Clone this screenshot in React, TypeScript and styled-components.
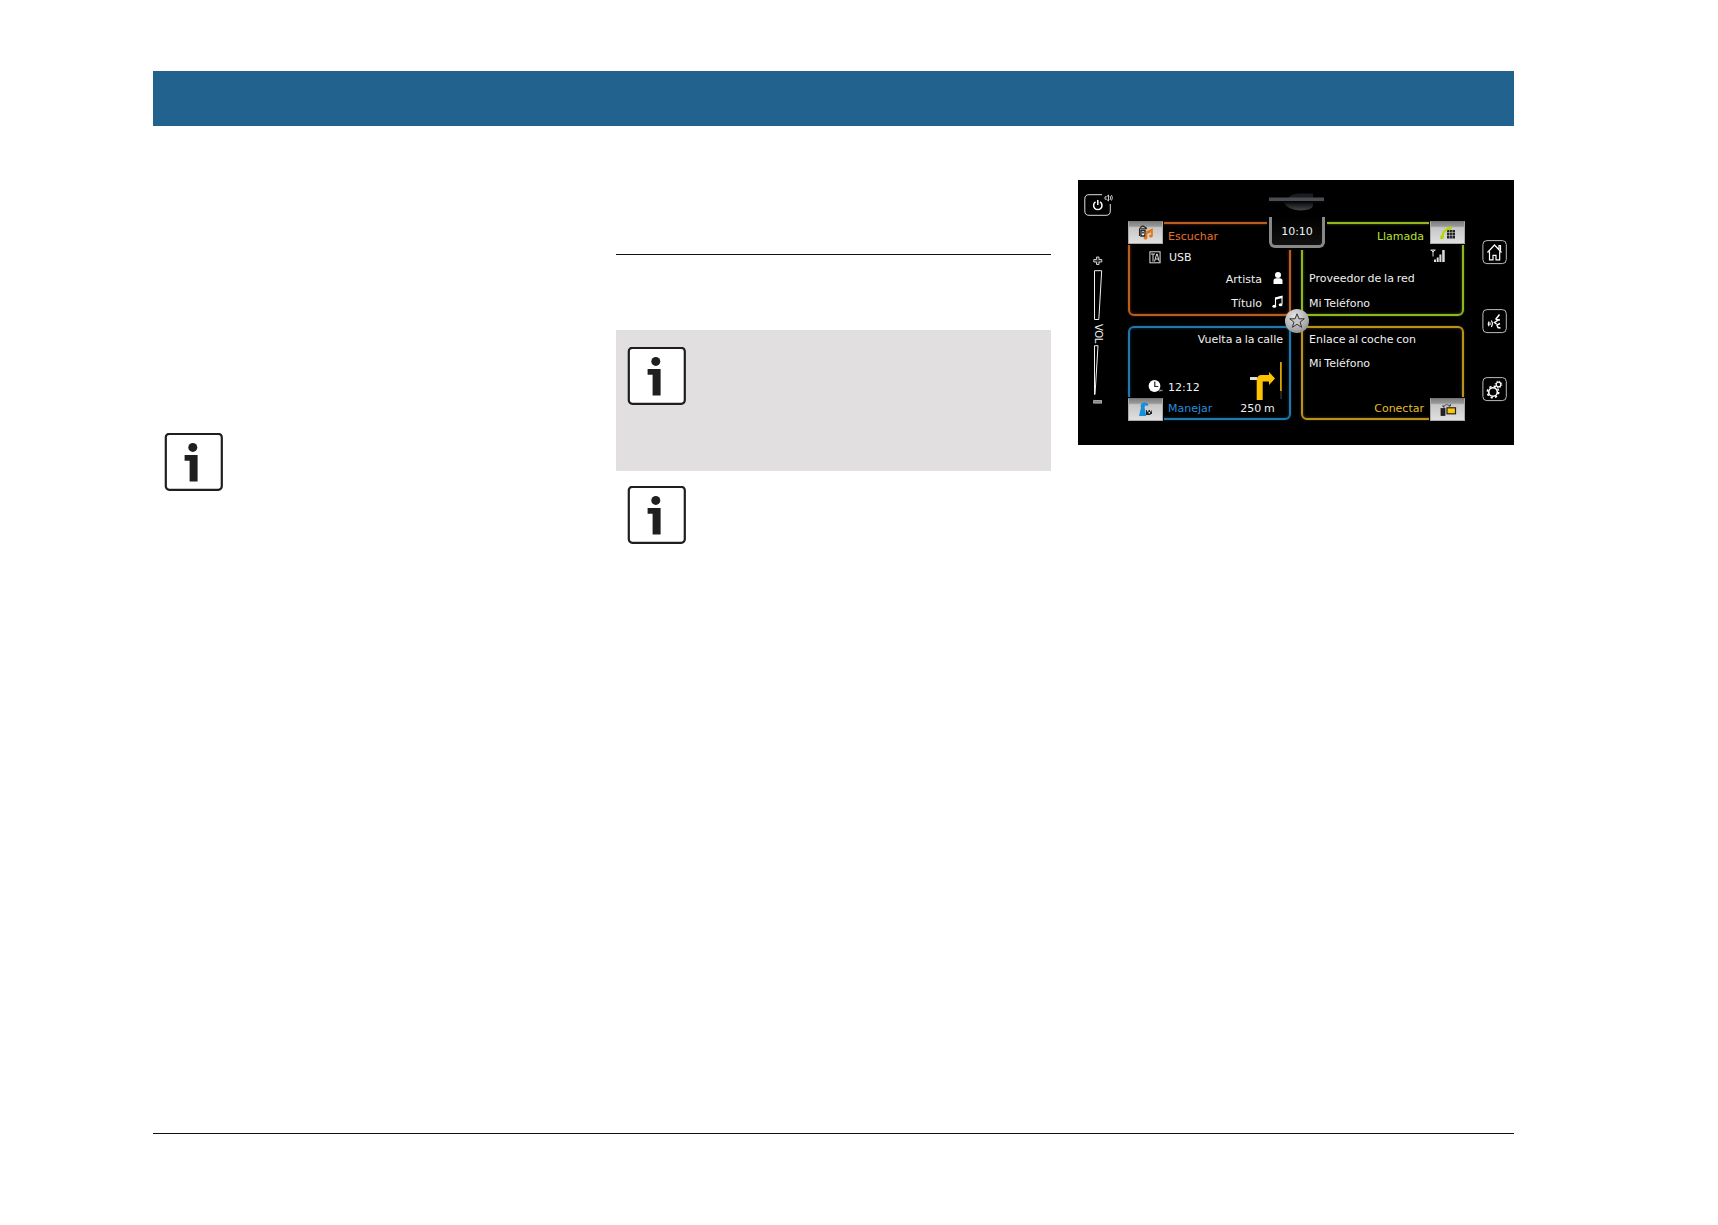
import React from 'react';
import styled, { createGlobalStyle } from 'styled-components';

const GlobalStyle = createGlobalStyle`
  * {
    box-sizing: border-box;
  }

  body {
    margin: 0;
    background: #fff;
  }

  svg {
    display: block;
    flex: none;
  }
`;

const Page = styled.div`
  width: 1718px;
  height: 1225px;
  padding: 71px 204px 0 153px;
  display: flex;
  flex-direction: column;
  overflow: hidden;
`;

const HeaderBar = styled.header`
  height: 55px;
  background: #22628f;
`;

const Columns = styled.main`
  flex: none;
  height: 1007px;
  display: grid;
  grid-template-columns: 463px 462px 436px;
`;

const Column = styled.section<{ $top: number; $gutter?: number }>`
  padding-top: ${({ $top }) => $top}px;
  padding-right: ${({ $gutter = 0 }) => $gutter}px;
`;

const Rule = styled.hr`
  width: 100%;
  height: 1px;
  margin: 0;
  border: 0;
  background: #111;
`;

const Note = styled.div<{ $shaded?: boolean }>`
  height: ${({ $shaded }) => ($shaded ? 141 : 90)}px;
  margin-top: ${({ $shaded }) => ($shaded ? 75 : 0)}px;
  padding: ${({ $shaded }) => ($shaded ? 17 : 15)}px 0 0 11px;
  background: ${({ $shaded }) => ($shaded ? '#e1dfe0' : 'transparent')};
`;

const Device = styled.div`
  height: 265px;
  display: grid;
  grid-template-columns: 50px 336px 50px;
  background: #000;
  color: #f0f0f0;
  font-family: 'DejaVu Sans', sans-serif;
  font-size: 11px;
  word-spacing: -0.7px;
`;

const LeftRail = styled.div`
  padding: 14px 0 0 6px;
  display: flex;
  flex-direction: column;
`;

const Volume = styled.div`
  width: 12px;
  margin: 38px 0 0 8px;
  display: flex;
  flex-direction: column;
  align-items: center;
`;

const VolumeGap = styled.div`
  height: 4px;
`;

const VolumeLabel = styled.span`
  height: 24px;
  line-height: 12px;
  font-size: 10px;
  letter-spacing: -0.4px;
  writing-mode: vertical-rl;
  text-align: center;
`;

const RightRail = styled.div`
  padding: 60px 0 0 18px;
  display: flex;
  flex-direction: column;
  gap: 43.5px;
`;

const Screen = styled.div`
  position: relative;
  padding-top: 42px;
  display: grid;
  grid-template-columns: 163px 163px;
  grid-auto-rows: 94px;
  gap: 10px;
`;

const Panel = styled.div<{ $color: string; $glow: string }>`
  position: relative;
  display: flex;
  flex-direction: column;
  border: 2px solid ${({ $color }) => $color};
  border-radius: 6px;
  box-shadow: 0 0 2px ${({ $glow }) => $glow}, inset 0 0 3px ${({ $glow }) => $glow};
`;

const Row = styled.div<{ $h?: number; $right?: boolean; $inset?: number }>`
  flex: none;
  height: ${({ $h = 22 }) => $h}px;
  padding: 0 ${({ $right, $inset = 6 }) => ($right ? $inset : 0)}px 0 ${({ $right, $inset = 6 }) => ($right ? 0 : $inset)}px;
  display: flex;
  align-items: center;
  justify-content: ${({ $right }) => ($right ? 'flex-end' : 'flex-start')};
  white-space: nowrap;
`;

const Spacer = styled.div`
  flex: 1;
`;

const Heading = styled.span<{ $color: string }>`
  color: ${({ $color }) => $color};
`;

const LeadIcon = styled.span`
  width: 20px;
`;

const TrailIcon = styled.span`
  width: 21px;
  padding-bottom: 3px;
  display: flex;
  justify-content: flex-end;
`;

const Distance = styled.span`
  margin-left: 28px;
`;

const Turn = styled.div`
  margin: -12px 7px 0 auto;
`;

const Tab = styled.div<{ $bottom?: boolean; $right?: boolean }>`
  position: absolute;
  ${({ $bottom }) => ($bottom ? 'bottom: -3px' : 'top: -3px')};
  ${({ $right }) => ($right ? 'right: -3px' : 'left: -2px')};
  width: 35px;
  height: 23px;
  display: flex;
  align-items: center;
  justify-content: center;
  border: 1px solid #aaa;
  border-top-color: #777;
  background: linear-gradient(#808080 0, #989898 20%, #c6c6c6 27%, #e0e0e0 100%);
  box-shadow: 0 0 0 1px #000;
`;

const Slot = styled.div`
  position: absolute;
  top: 12px;
  left: 141px;
`;

const ClockTab = styled.div`
  position: absolute;
  top: 37px;
  left: 139px;
  width: 60px;
  height: 33px;
  padding: 0 2px 2px;
  background: #000;
`;

const ClockFace = styled.div`
  height: 31px;
  border: 3px solid #888;
  border-top: 0;
  border-radius: 0 0 6px 6px;
  background: linear-gradient(#000, #111);
  text-align: center;
  line-height: 30px;
`;

const StarButton = styled.div`
  position: absolute;
  top: 129px;
  left: 157px;
  width: 24px;
  height: 24px;
  display: grid;
  place-items: center;
  border-radius: 50%;
  background: radial-gradient(circle at 40% 30%, #e5e5e5, #aaa 60%, #777);
`;

const InfoIcon = () => (
  <svg width="59" height="59" viewBox="-0.6 0 59 59">
    <rect x="1.2" y="0.8" width="56" height="56" rx="3.5" fill="#fff" stroke="#211e1f" strokeWidth="2.2" />
    <circle cx="28.2" cy="14.4" r="4.5" fill="#211e1f" />
    <path d="M20 22H33v26.4h-8V27.8h-5z" fill="#211e1f" />
  </svg>
);

const PowerIcon = () => (
  <svg width="30" height="24" viewBox="0 0 30 24" fill="none" stroke="#ddd">
    <path d="M18 .7H5Q.8.7.8 5v12q0 4.300 4.200 4.300h17q4.300 0 4.300-4.300V10" />
    <path d="M11.500 7.900a4.200 4.200 0 1 0 4.600 0M13.800 6v5" strokeWidth="1.500" stroke="#fff" />
    <path d="M21 2.800h1.500l2-1.800v6l-2-1.800H21zM26 2q1.200 2 0 4M27.500 1q1.800 3 0 5.500" strokeWidth=".9" />
  </svg>
);

const PlusIcon = () => (
  <svg width="10" height="10" viewBox="0 0 10 10">
    <path d="M3.500 1h2.500v2.500h2.800V6H6v2.500H3.500V6H.8V3.500h2.700z" fill="#333" stroke="#ccc" />
  </svg>
);

const VolumeWedge = ({ small }: { small?: boolean }) => (
  <svg width="10" height="51" viewBox="0 0 10 51" fill="none" stroke="#eee">
    <path d={small ? 'M1.500.7h3.500L2 49.500h-.5z' : 'M1.500.7h7.200L5.800 49.500H1.500z'} />
  </svg>
);

const MinusIcon = () => (
  <svg width="10" height="4" viewBox="0 0 10 4">
    <rect x=".6" y=".6" width="8" height="2.500" fill="#888" stroke="#bbb" strokeWidth=".8" />
  </svg>
);

const RailButton: React.FC<{ children: React.ReactNode }> = ({ children }) => (
  <svg width="26" height="25" viewBox="0 0 26 25" fill="none" stroke="#fff">
    <rect x=".9" y=".6" width="23.400" height="23" rx="4" stroke="#bbb" />
    {children}
  </svg>
);

const RadioMusicIcon = () => (
  <svg width="18" height="18" viewBox="0 0 18 18" fill="none">
    <path d="M2 4.800h7.500M2.500 5v7M3 3.500l3-1.500 4 2.500" stroke="#222" strokeWidth="1.100" />
    <path d="M4 6.500h4V12H4z" fill="#eee" stroke="#222" strokeWidth="1.400" />
    <path d="M5.200 8h1.600v1.500H5.200z" fill="#222" />
    <path d="M9.500 14V8l5.500-2.500v6M9.500 9.500L15 7" stroke="#e07818" strokeWidth="1.700" />
    <ellipse cx="8.500" cy="14" rx="1.900" ry="1.600" fill="#e07818" />
    <ellipse cx="13.900" cy="12" rx="1.900" ry="1.600" fill="#e07818" />
  </svg>
);

const DialIcon = () => (
  <svg width="18" height="16" viewBox="0 0 18 16" fill="none">
    <path d="M8 5h8v8.500H8z" fill="#222" />
    <path d="M10.500 5v8.500M13.300 5v8.500M8 7.500h8M8 10.500h8" stroke="#ddd" strokeWidth=".5" />
    <path d="M3.300 12Q3.500 5 10.500 3.500" stroke="#b2d800" strokeWidth="2.200" />
    <path d="M1.500 10.500l3.500.5-.7 3H1.200zM8 2l4.500-.5.5 2.500L9.500 5z" fill="#b2d800" />
  </svg>
);

const RouteIcon = () => (
  <svg width="18" height="17" viewBox="0 0 18 17">
    <path d="M2 15L4 6.500 3.500 5Q4 1.500 7.500 1.500q3 0 4 2L10.500 5 8.500 4.300 7.500 6l1.700 9z" fill="#178fd8" />
    <path d="M9 9h6v5H9z" fill="#222" />
    <path d="M10 9h1.500v1.500H10zM13 9h1.500v1.500H13zM11.500 11H13v1.500h-1.500zM13.500 13H15v1h-1.500z" fill="#ddd" />
  </svg>
);

const LinkIcon = () => (
  <svg width="18" height="16" viewBox="0 0 18 16">
    <rect x="2" y="6.500" width="4" height="7" fill="#222" stroke="#222" strokeWidth=".8" />
    <rect x="8" y="5.800" width="8.500" height="6" fill="#ffc800" stroke="#222" strokeWidth="1.200" />
    <path d="M4 5q3-4 7-1M4 3v2h2M9.500 4h2V2" stroke="#222" strokeWidth=".7" fill="none" />
  </svg>
);

const TrafficIcon = () => (
  <svg width="12" height="13" viewBox="0 0 12 13" fill="none" stroke="#ddd">
    <rect x=".9" y=".8" width="10.200" height="11" />
    <path d="M2 3h4M4 3v7.500M5.500 10.500L7.700 3h.5l2 7.500M6.300 8h3.200" />
  </svg>
);

const PersonIcon = () => (
  <svg width="10" height="14" viewBox="0 0 10 14" fill="#fff">
    <circle cx="5" cy="4" r="3" />
    <path d="M.5 13v-3q0-2.700 3-2.700h3q3 0 3 2.700v3z" />
  </svg>
);

const NotesIcon = () => (
  <svg width="11" height="14" viewBox="0 0 11 14">
    <path d="M3.500 11V3l6.500-1.700V9" fill="none" stroke="#fff" strokeWidth="1.100" />
    <path d="M3.500 2.700L10.300 1v2L3.500 4.700z" fill="#fff" />
    <ellipse cx="2.300" cy="11.200" rx="1.900" ry="1.500" fill="#fff" />
    <ellipse cx="8.600" cy="9.700" rx="1.900" ry="1.500" fill="#fff" />
  </svg>
);

const SignalIcon = () => (
  <svg width="16" height="14" viewBox="0 0 16 14" fill="#ddd">
    <path d="M4 13v-2.500h2V13zM6.700 13V8.500h2V13zM9.400 13V5.500h2V13zM12.200 13V1h2.500v12z" />
    <path d="M.5 1h5M1 1l2 2 2-2M3 1v6.500" stroke="#ddd" fill="none" />
  </svg>
);

const TimeIcon = () => (
  <svg width="16" height="14" viewBox="0 0 16 14">
    <circle cx="6.500" cy="6" r="5.900" fill="#fff" />
    <path d="M6.800 1.500v5h3.500" fill="none" stroke="#222" strokeWidth="1.200" />
    <path d="M11.500 9l1.800 1.500-1.800 1.500zM13.500 9.500l1.500 1-1.500 1z" fill="#aaa" />
  </svg>
);

const TurnRightIcon = () => (
  <svg width="32" height="38" viewBox="0 0 32 38">
    <path d="M0 15h7v3H0z" fill="#ddd" />
    <path d="M6.700 38V18.500q0-5.500 5-5.500H19v-3l6 6.500-6 6.500v-3.500h-6.300V38z" fill="#fdc300" />
    <path d="M30 0h1.800v29H30z" fill="#d9a300" />
    <path d="M30.300 29h1.500v8h-1.500z" fill="#333" />
  </svg>
);

const SlotIcon = () => (
  <svg width="56" height="22" viewBox="0 0 56 22">
    <defs>
      <linearGradient id="slot" x2="0" y2="1">
        <stop offset="0" stopColor="#0a0a0a" />
        <stop offset="1" stopColor="#44484c" />
      </linearGradient>
    </defs>
    <path d="M20 5q2-3 10-3.500h14V6H20z" fill="#1b1d1f" />
    <path d="M15 10h29v4q-1 4-13 4.500Q19 18 15 11z" fill="url(#slot)" />
    <rect x="0" y="5.500" width="55" height="3.500" fill="#4a4d52" />
    <path d="M0 9h55v1.500H0z" fill="#060606" />
  </svg>
);

const StarIcon = () => (
  <svg width="18" height="18" viewBox="0 0 18 18" fill="#c4c4c4" stroke="#333" strokeLinejoin="round">
    <path d="M9 1.800l2 5h5.300l-4.200 3.300 1.500 5.200L9 12.300l-4.600 3 1.500-5.200L1.700 6.800H7z" />
  </svg>
);

const App: React.FC = () => {
  return (
    <Page>
      <GlobalStyle />
      <HeaderBar />
      <Columns>
        <Column $top={292} $gutter={28}>
          <Note>
            <InfoIcon />
          </Note>
        </Column>
        <Column $top={128} $gutter={27}>
          <Rule />
          <Note $shaded>
            <InfoIcon />
          </Note>
          <Note>
            <InfoIcon />
          </Note>
        </Column>
        <Column $top={54}>
          <Device>
            <LeftRail>
              <PowerIcon />
              <Volume>
                <PlusIcon />
                <VolumeGap />
                <VolumeWedge />
                <VolumeLabel>VOL</VolumeLabel>
                <VolumeWedge small />
                <VolumeGap />
                <MinusIcon />
              </Volume>
            </LeftRail>
            <Screen>
              <Panel $color="#b85f20" $glow="#6b3008">
                <Row $inset={38} $h={24}>
                  <Heading $color="#e8702a">Escuchar</Heading>
                </Row>
                <Row $inset={19} $h={18}>
                  <LeadIcon><TrafficIcon /></LeadIcon>
                  USB
                </Row>
                <Row $right $h={26}>
                  Artista
                  <TrailIcon><PersonIcon /></TrailIcon>
                </Row>
                <Row $right $h={22}>
                  Título
                  <TrailIcon><NotesIcon /></TrailIcon>
                </Row>
                <Tab><RadioMusicIcon /></Tab>
              </Panel>
              <Panel $color="#8fb51f" $glow="#425a06">
                <Row $right $inset={38} $h={24}>
                  <Heading $color="#b9e030">Llamada</Heading>
                </Row>
                <Row $right $inset={16} $h={16}>
                  <SignalIcon />
                </Row>
                <Row $h={28}>Proveedor de la red</Row>
                <Row $h={22}>Mi Teléfono</Row>
                <Tab $right><DialIcon /></Tab>
              </Panel>
              <Panel $color="#2178ad" $glow="#0a3b5a">
                <Row $right>Vuelta a la calle</Row>
                <Spacer />
                <Row $inset={18}>
                  <LeadIcon><TimeIcon /></LeadIcon>
                  12:12
                  <Turn><TurnRightIcon /></Turn>
                </Row>
                <Row $inset={38} $h={20}>
                  <Heading $color="#2090dc">Manejar</Heading>
                  <Distance>250 m</Distance>
                </Row>
                <Tab $bottom><RouteIcon /></Tab>
              </Panel>
              <Panel $color="#b8921c" $glow="#584205">
                <Row>Enlace al coche con</Row>
                <Row $h={26}>Mi Teléfono</Row>
                <Spacer />
                <Row $right $inset={38} $h={20}>
                  <Heading $color="#e8bd28">Conectar</Heading>
                </Row>
                <Tab $bottom $right><LinkIcon /></Tab>
              </Panel>
              <Slot><SlotIcon /></Slot>
              <ClockTab>
                <ClockFace>10:10</ClockFace>
              </ClockTab>
              <StarButton><StarIcon /></StarButton>
            </Screen>
            <RightRail>
              <RailButton>
                <path d="M5.500 12.500l7-7.500 7 7.500M7.500 11.500v8.300h3.500v-4.500h3v4.500h3.700v-8.300M17 9V5.500h1.500v5" strokeWidth="1.200" />
              </RailButton>
              <RailButton>
                <path d="M17.500 5.500L14 10l1.500 1.500-3 2 2 1.500M14 10.500l4 .5M18 14.500l-3 1.500 1 2.500 2.500.5" strokeWidth="1.500" />
                <path d="M7 12.500q-1.500 2.300 0 4.600M9.300 11.500q2.200 3.200 0 6.500M8 13.500v2.500" strokeWidth="1.200" />
              </RailButton>
              <RailButton>
                <circle cx="11" cy="15" r="4.300" strokeWidth="1.600" />
                <circle cx="11" cy="15" r="5.700" strokeWidth="1.500" strokeDasharray="2.200 2.277" />
                <circle cx="16.500" cy="7.500" r="2.300" strokeWidth="1.200" />
                <circle cx="16.500" cy="7.500" r="3.300" strokeDasharray="1.300 1.292" />
              </RailButton>
            </RightRail>
          </Device>
        </Column>
      </Columns>
      <Rule />
    </Page>
  );
};

export default App;
